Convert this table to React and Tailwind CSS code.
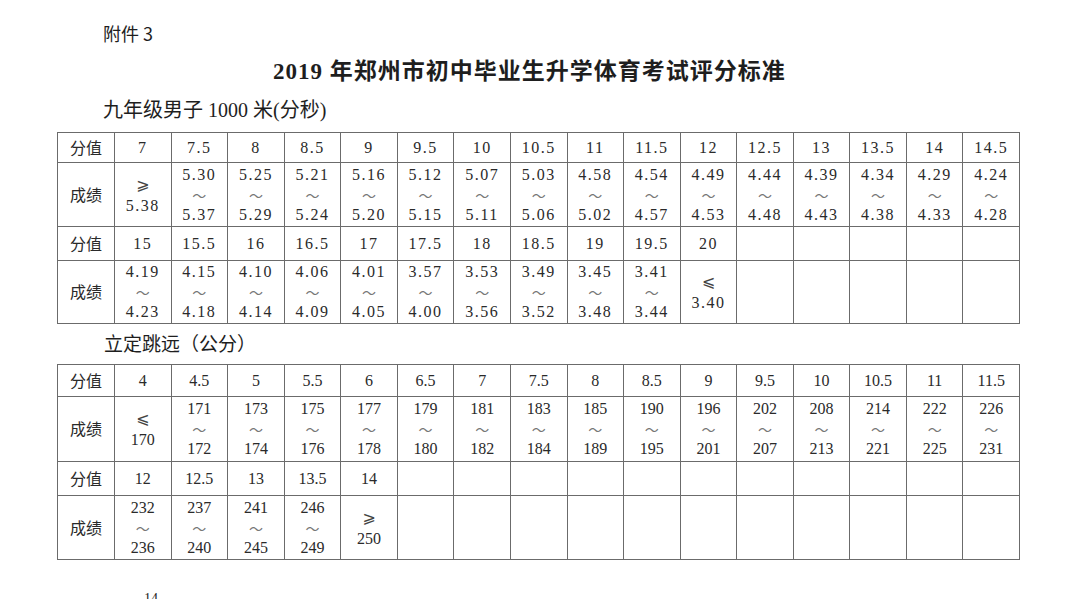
import React from "react";

const FONT = { fontFamily: '"Liberation Serif", "Noto Sans CJK SC", serif' };
const CJK = { fontFamily: '"Noto Sans CJK SC", "Liberation Sans", sans-serif' };
const SYM = { fontFamily: '"DejaVu Sans", "Liberation Serif", serif' };

const run = {
  top1: ["7", "7.5", "8", "8.5", "9", "9.5", "10", "10.5", "11", "11.5", "12", "12.5", "13", "13.5", "14", "14.5"],
  res1: [
    ["⩾", "5.38"], ["5.30", "5.37"], ["5.25", "5.29"], ["5.21", "5.24"], ["5.16", "5.20"], ["5.12", "5.15"],
    ["5.07", "5.11"], ["5.03", "5.06"], ["4.58", "5.02"], ["4.54", "4.57"], ["4.49", "4.53"], ["4.44", "4.48"],
    ["4.39", "4.43"], ["4.34", "4.38"], ["4.29", "4.33"], ["4.24", "4.28"],
  ],
  top2: ["15", "15.5", "16", "16.5", "17", "17.5", "18", "18.5", "19", "19.5", "20", "", "", "", "", ""],
  res2: [
    ["4.19", "4.23"], ["4.15", "4.18"], ["4.10", "4.14"], ["4.06", "4.09"], ["4.01", "4.05"], ["3.57", "4.00"],
    ["3.53", "3.56"], ["3.49", "3.52"], ["3.45", "3.48"], ["3.41", "3.44"], ["⩽", "3.40"], null, null, null, null, null,
  ],
  heights: ["h-[30px]", "h-[64px]", "h-[34px]", "h-[63px]"],
  tracking: "tracking-[1.5px]",
};

const jump = {
  top1: ["4", "4.5", "5", "5.5", "6", "6.5", "7", "7.5", "8", "8.5", "9", "9.5", "10", "10.5", "11", "11.5"],
  res1: [
    ["⩽", "170"], ["171", "172"], ["173", "174"], ["175", "176"], ["177", "178"], ["179", "180"], ["181", "182"],
    ["183", "184"], ["185", "189"], ["190", "195"], ["196", "201"], ["202", "207"], ["208", "213"], ["214", "221"],
    ["222", "225"], ["226", "231"],
  ],
  top2: ["12", "12.5", "13", "13.5", "14", "", "", "", "", "", "", "", "", "", "", ""],
  res2: [
    ["232", "236"], ["237", "240"], ["241", "245"], ["246", "249"], ["⩾", "250"],
    null, null, null, null, null, null, null, null, null, null, null,
  ],
  heights: ["h-[32px]", "h-[65px]", "h-[34px]", "h-[64px]"],
  tracking: "tracking-normal",
};

function Result({ pair, tracking }) {
  if (!pair) return null;
  const [a, b] = pair;
  if (a === "⩾" || a === "⩽") {
    return (
      <div className="flex flex-col items-center leading-[21px]">
        <span style={SYM} className="text-[16px] text-[#444]">{a}</span>
        <span className={tracking}>{b}</span>
      </div>
    );
  }
  return (
    <div className="flex flex-col items-center leading-[20px]">
      <span className={tracking}>{a}</span>
      <span style={CJK} className="text-[14px] text-[#777]">～</span>
      <span className={tracking}>{b}</span>
    </div>
  );
}

const td = "border border-[#6b6b6b] p-0 text-center align-middle";

function ScoreTable({ data }) {
  const rows = [
    { label: "分值", cells: data.top1, kind: "score" },
    { label: "成绩", cells: data.res1, kind: "result" },
    { label: "分值", cells: data.top2, kind: "score" },
    { label: "成绩", cells: data.res2, kind: "result" },
  ];
  return (
    <table style={FONT} className="ml-[57px] w-[963px] table-fixed border-collapse text-[16px] text-[#2a2a2a]">
      <colgroup>
        <col className="w-[57px]" />
        {data.top1.map((_, i) => (
          <col key={i} />
        ))}
      </colgroup>
      <tbody>
        {rows.map((row, r) => (
          <tr key={r} className={data.heights[r]}>
            <td className={td}>
              <span style={CJK} className="text-[16px]">{row.label}</span>
            </td>
            {row.cells.map((c, i) => (
              <td key={i} className={td}>
                {row.kind === "score" ? (
                  <span className={data.tracking}>{c}</span>
                ) : (
                  <Result pair={c} tracking={data.tracking} />
                )}
              </td>
            ))}
          </tr>
        ))}
      </tbody>
    </table>
  );
}

export default function App() {
  return (
    <div style={FONT} className="relative h-[599px] w-[1080px] overflow-hidden bg-white text-[#1e1e1e]">
      <div style={CJK} className="pl-[103px] pt-[21px] text-[18px] leading-[24px]">
        附件 3
      </div>
      <h1 className="mt-[12px] pl-[273px] text-[23px] font-bold leading-[30px] tracking-[1px]">
        2019 年郑州市初中毕业生升学体育考试评分标准
      </h1>
      <div className="mt-[11px] pl-[103px] text-[20px] leading-[24px]">九年级男子 1000 米(分秒)</div>
      <div className="mt-[10px]">
        <ScoreTable data={run} />
      </div>
      <div className="mt-[9px] pl-[104px] text-[19px] leading-[24px]">立定跳远（公分）</div>
      <div className="mt-[7px]">
        <ScoreTable data={jump} />
      </div>
      <div className="mt-[31px] pl-[144px] text-[14px] leading-[16px]">14</div>
    </div>
  );
}
